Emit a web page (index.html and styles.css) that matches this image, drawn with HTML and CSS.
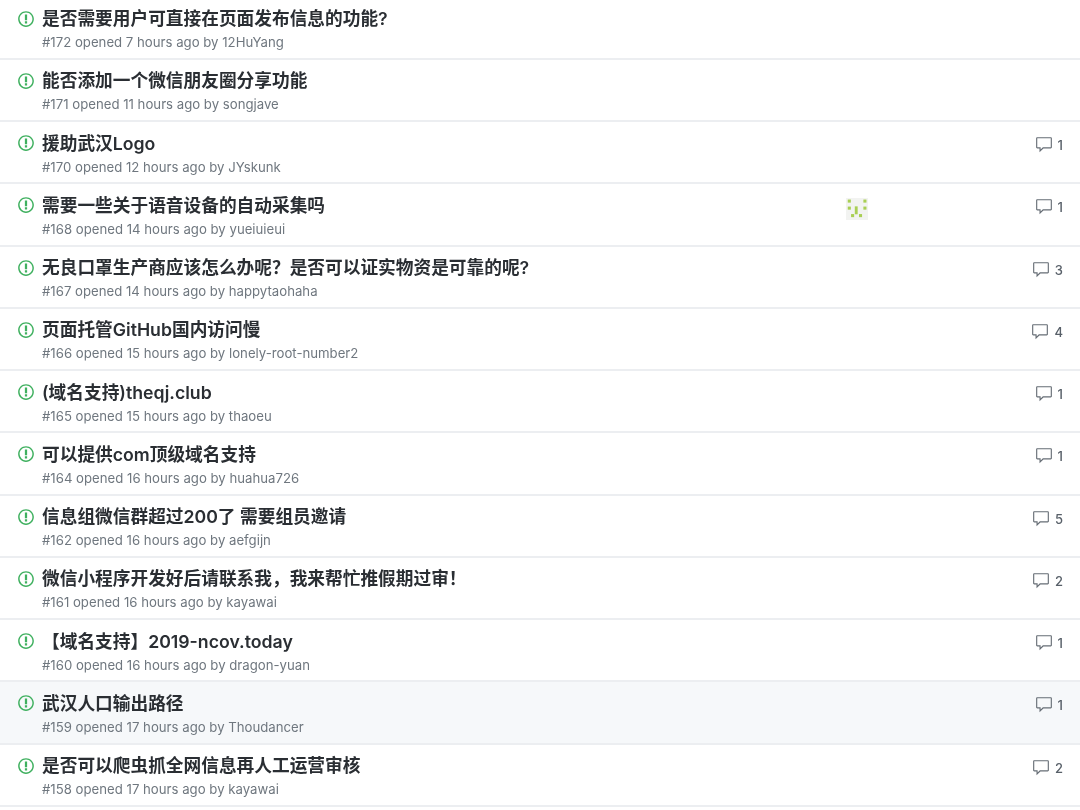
FILE: index.html
```html
<!DOCTYPE html>
<html lang="zh-CN">
<head>
  <meta charset="UTF-8">
  <title>Issues</title>
  <link rel="stylesheet" href="styles.css">
</head>
<body>
  <svg class="defs" width="0" height="0">
    <symbol id="issue-icon" viewBox="0 0 14 16"><path d="M7 2.3c3.14 0 5.7 2.56 5.7 5.7s-2.56 5.7-5.7 5.7A5.71 5.71 0 011.3 8c0-3.14 2.56-5.7 5.7-5.7zM7 1C3.14 1 0 4.14 0 8s3.14 7 7 7 7-3.14 7-7-3.14-7-7-7zm1 3H6v5h2V4zm0 6H6v2h2v-2z"/></symbol>
    <symbol id="comment-icon" viewBox="0 0 16 16"><path d="M14 1H2c-.55 0-1 .45-1 1v8c0 .55.45 1 1 1h2v3.5L7.5 11H14c.55 0 1-.45 1-1V2c0-.55-.45-1-1-1zm0 9H7l-2 2v-2H2V2h12v8z"/></symbol>
  </svg>

  <ul class="issues">
    <li class="issue">
      <svg class="issue-icon"><use href="#issue-icon"/></svg>
      <div class="issue-main">
        <a class="issue-title">是否需要用户可直接在页面发布信息的功能?</a>
        <div class="issue-meta">#172 opened 7 hours ago by 12HuYang</div>
      </div>
    </li>
    <li class="issue">
      <svg class="issue-icon"><use href="#issue-icon"/></svg>
      <div class="issue-main">
        <a class="issue-title">能否添加一个微信朋友圈分享功能</a>
        <div class="issue-meta">#171 opened 11 hours ago by songjave</div>
      </div>
    </li>
    <li class="issue">
      <svg class="issue-icon"><use href="#issue-icon"/></svg>
      <div class="issue-main">
        <a class="issue-title">援助武汉Logo</a>
        <div class="issue-meta">#170 opened 12 hours ago by JYskunk</div>
      </div>
      <div class="issue-comments"><svg class="comment-icon"><use href="#comment-icon"/></svg>1</div>
    </li>
    <li class="issue">
      <svg class="issue-icon"><use href="#issue-icon"/></svg>
      <div class="issue-main">
        <a class="issue-title">需要一些关于语音设备的自动采集吗</a>
        <div class="issue-meta">#168 opened 14 hours ago by yueiuieui</div>
      </div>
      <svg class="avatar" viewBox="0 0 5 5">
        <rect width="5" height="5" fill="#f2f3f1"/>
        <g fill="#a9cf54">
          <rect x="0.4" y="0.35" width="0.7" height="0.7"/>
          <rect x="3.95" y="0.35" width="0.7" height="0.7"/>
          <rect x="0.4" y="1.95" width="0.7" height="0.7"/>
          <rect x="3.95" y="1.95" width="0.7" height="0.7"/>
          <rect x="2" y="1.9" width="0.65" height="1.8"/>
          <rect x="1.15" y="3.65" width="0.7" height="0.7"/>
          <rect x="2.95" y="3.65" width="0.7" height="0.7"/>
        </g>
      </svg>
      <div class="issue-comments"><svg class="comment-icon"><use href="#comment-icon"/></svg>1</div>
    </li>
    <li class="issue">
      <svg class="issue-icon"><use href="#issue-icon"/></svg>
      <div class="issue-main">
        <a class="issue-title">无良口罩生产商应该怎么办呢&#xFF1F;是否可以证实物资是可靠的呢?</a>
        <div class="issue-meta">#167 opened 14 hours ago by happytaohaha</div>
      </div>
      <div class="issue-comments"><svg class="comment-icon"><use href="#comment-icon"/></svg>3</div>
    </li>
    <li class="issue">
      <svg class="issue-icon"><use href="#issue-icon"/></svg>
      <div class="issue-main">
        <a class="issue-title">页面托管GitHub国内访问慢</a>
        <div class="issue-meta">#166 opened 15 hours ago by lonely-root-number2</div>
      </div>
      <div class="issue-comments"><svg class="comment-icon"><use href="#comment-icon"/></svg>4</div>
    </li>
    <li class="issue">
      <svg class="issue-icon"><use href="#issue-icon"/></svg>
      <div class="issue-main">
        <a class="issue-title">(域名支持)theqj.club</a>
        <div class="issue-meta">#165 opened 15 hours ago by thaoeu</div>
      </div>
      <div class="issue-comments"><svg class="comment-icon"><use href="#comment-icon"/></svg>1</div>
    </li>
    <li class="issue">
      <svg class="issue-icon"><use href="#issue-icon"/></svg>
      <div class="issue-main">
        <a class="issue-title">可以提供com顶级域名支持</a>
        <div class="issue-meta">#164 opened 16 hours ago by huahua726</div>
      </div>
      <div class="issue-comments"><svg class="comment-icon"><use href="#comment-icon"/></svg>1</div>
    </li>
    <li class="issue">
      <svg class="issue-icon"><use href="#issue-icon"/></svg>
      <div class="issue-main">
        <a class="issue-title">信息组微信群超过200了 需要组员邀请</a>
        <div class="issue-meta">#162 opened 16 hours ago by aefgijn</div>
      </div>
      <div class="issue-comments"><svg class="comment-icon"><use href="#comment-icon"/></svg>5</div>
    </li>
    <li class="issue">
      <svg class="issue-icon"><use href="#issue-icon"/></svg>
      <div class="issue-main">
        <a class="issue-title">微信小程序开发好后请联系我&#xFF0C;我来帮忙推假期过审&#xFF01;</a>
        <div class="issue-meta">#161 opened 16 hours ago by kayawai</div>
      </div>
      <div class="issue-comments"><svg class="comment-icon"><use href="#comment-icon"/></svg>2</div>
    </li>
    <li class="issue">
      <svg class="issue-icon"><use href="#issue-icon"/></svg>
      <div class="issue-main">
        <a class="issue-title">【域名支持】2019-ncov.today</a>
        <div class="issue-meta">#160 opened 16 hours ago by dragon-yuan</div>
      </div>
      <div class="issue-comments"><svg class="comment-icon"><use href="#comment-icon"/></svg>1</div>
    </li>
    <li class="issue hover">
      <svg class="issue-icon"><use href="#issue-icon"/></svg>
      <div class="issue-main">
        <a class="issue-title">武汉人口输出路径</a>
        <div class="issue-meta">#159 opened 17 hours ago by Thoudancer</div>
      </div>
      <div class="issue-comments"><svg class="comment-icon"><use href="#comment-icon"/></svg>1</div>
    </li>
    <li class="issue">
      <svg class="issue-icon"><use href="#issue-icon"/></svg>
      <div class="issue-main">
        <a class="issue-title">是否可以爬虫抓全网信息再人工运营审核</a>
        <div class="issue-meta">#158 opened 17 hours ago by kayawai</div>
      </div>
      <div class="issue-comments"><svg class="comment-icon"><use href="#comment-icon"/></svg>2</div>
    </li>
  </ul>
</body>
</html>
```

FILE: styles.css
```css
body {
  margin: 0;
  background: #fff;
  font-family: Inter, "Noto Sans CJK SC", sans-serif;
  color: #2a2e33;
  overflow: hidden;
}

.defs {
  position: absolute;
}

.issues {
  list-style: none;
  margin: -2.4px 0 0;
  padding: 0;
  filter: blur(0.35px);
}

.issue {
  position: relative;
  display: flex;
  box-sizing: border-box;
  height: 62.25px;
  padding: 8.4px 17px 0 18px;
  border-bottom: 2px solid #eceef1;
}

.issue.hover {
  background: #f6f8fa;
}

.issue-icon {
  flex: none;
  width: 16px;
  height: 18px;
  margin-top: 3.6px;
  fill: #3fb05f;
}

.issue-main {
  flex: 1;
  margin-left: 8px;
}

.issue-title {
  display: block;
  font-size: 17.7px;
  font-weight: 600;
  line-height: 26px;
}

.issue-meta {
  font-size: 13.2px;
  line-height: 20px;
  color: #6f777f;
}

.issue-comments {
  display: flex;
  align-items: center;
  align-self: flex-start;
  margin-top: 5.6px;
  font-size: 13px;
  font-weight: 500;
  line-height: 18px;
  color: #586069;
}

.comment-icon {
  width: 18px;
  height: 18px;
  margin-right: 5px;
  fill: #666d75;
}

.avatar {
  position: absolute;
  left: 846px;
  top: 14px;
  width: 22px;
  height: 22px;
}
```
